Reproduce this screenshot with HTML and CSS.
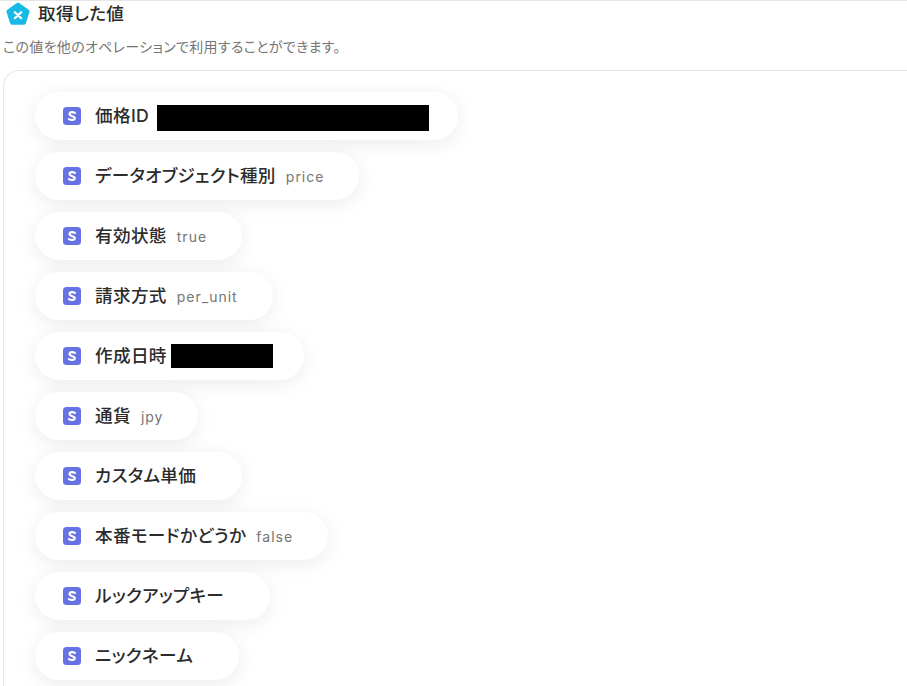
FILE: index.html
```html
<!DOCTYPE html>
<html lang="ja">
<head>
<meta charset="utf-8">
<title>取得した値</title>
<link rel="stylesheet" href="styles.css">
</head>
<body>
<div class="page">
  <header class="head">
    <svg class="penta" viewBox="0 0 24 24" width="24" height="24"><path d="M10.800 1 1.400 7.800c-.8.6-1.100 1.500-.8 2.400l3.500 11c.3.9 1.100 1.500 2 1.500h11.800c.9 0 1.700-.6 2-1.500l3.500-11c.3-.9 0-1.800-.8-2.400L13.200 1c-.7-.5-1.700-.5-2.400 0z" fill="#19b9e6"/><path d="M8.800 10.200 15.200 16.200M15.200 10.200 8.800 16.200" stroke="#fff" stroke-width="2.200" stroke-linecap="round"/></svg>
    <h2 class="title">取得した値</h2>
  </header>
  <p class="desc">この値を他のオペレーションで利用することができます。</p>
  <section class="panel">
    <div class="pill"><svg class="s" viewBox="0 0 18 18"><use href="#s"/></svg><span class="name">価格ID</span><span class="mask mask-id"></span></div>
    <div class="pill"><svg class="s" viewBox="0 0 18 18"><use href="#s"/></svg><span class="name">データオブジェクト種別</span><span class="val">price</span></div>
    <div class="pill"><svg class="s" viewBox="0 0 18 18"><use href="#s"/></svg><span class="name">有効状態</span><span class="val">true</span></div>
    <div class="pill"><svg class="s" viewBox="0 0 18 18"><use href="#s"/></svg><span class="name">請求方式</span><span class="val">per_unit</span></div>
    <div class="pill"><svg class="s" viewBox="0 0 18 18"><use href="#s"/></svg><span class="name">作成日時</span><span class="mask mask-date"></span></div>
    <div class="pill"><svg class="s" viewBox="0 0 18 18"><use href="#s"/></svg><span class="name">通貨</span><span class="val">jpy</span></div>
    <div class="pill"><svg class="s" viewBox="0 0 18 18"><use href="#s"/></svg><span class="name">カスタム単価</span><span class="val"></span></div>
    <div class="pill"><svg class="s" viewBox="0 0 18 18"><use href="#s"/></svg><span class="name">本番モードかどうか</span><span class="val">false</span></div>
    <div class="pill"><svg class="s" viewBox="0 0 18 18"><use href="#s"/></svg><span class="name">ルックアップキー</span><span class="val"></span></div>
    <div class="pill"><svg class="s" viewBox="0 0 18 18"><use href="#s"/></svg><span class="name">ニックネーム</span><span class="val"></span></div>
  </section>
</div>
<svg class="defs" width="0" height="0"><defs><g id="s"><rect width="18" height="18" rx="3.500" fill="#6772e5"/><path d="M12 6C11.200 5.400 10.200 5.100 9.100 5.100 7.600 5.100 6.500 5.800 6.500 7.100c0 2.700 5.300 1.400 5.300 4 0 1.200-1.200 1.900-2.700 1.900-1.200 0-2.400-.4-3.300-1" fill="none" stroke="#fff" stroke-width="2.100" stroke-linecap="round"/></g></defs></svg>
</body>
</html>
```

FILE: styles.css
```css
* { box-sizing: border-box; }
html, body { margin: 0; padding: 0; height: 100%; overflow: hidden; background: #fff; }
body { font-family: Inter, "Noto Sans CJK JP", sans-serif; color: #2b2b2b; font-feature-settings: "palt"; }
.page { height: 686px; border-top: 1px solid #e6e6e6; padding-left: 2px; overflow: hidden; }
.head { display: flex; align-items: center; gap: 8px; height: 26px; padding-left: 4px; }
.penta { flex: none; }
.title { margin: 0; font-size: 17.6px; font-weight: 500; line-height: 24px; letter-spacing: .35px; color: #2b2b2b; }
.desc { margin: 10px 0 0; padding-left: 1px; font-size: 14px; line-height: 20px; letter-spacing: .32px; color: #757575; }
.panel { margin: 13px 0 0 1px; border: 1px solid #e6e6e6; border-right: 0; border-bottom: 0; border-radius: 16px 0 0 0; padding: 21px 0 60px 31px; display: flex; flex-direction: column; align-items: flex-start; gap: 12px; }
.pill { display: flex; align-items: center; height: 48px; padding: 0 35px 0 28px; background: #fff; border-radius: 24px; box-shadow: 0 4px 20px rgba(0, 0, 0, .08); }
.s { width: 18px; height: 18px; flex: none; margin-right: 14px; }
.name { font-size: 17.6px; font-weight: 500; letter-spacing: .35px; line-height: 24px; color: #2b2b2b; white-space: nowrap; }
.val { margin-left: 10px; font-size: 14px; color: #757575; letter-spacing: 1px; white-space: nowrap; }
.val:empty { margin-left: 11px; }
.mask { background: #000; display: block; }
.mask-id { width: 272px; height: 26px; margin: 3px -6px 0 8px; }
.mask-date { width: 102px; height: 24px; margin: 0 -4px 0 4px; }
.defs { position: absolute; }
```
